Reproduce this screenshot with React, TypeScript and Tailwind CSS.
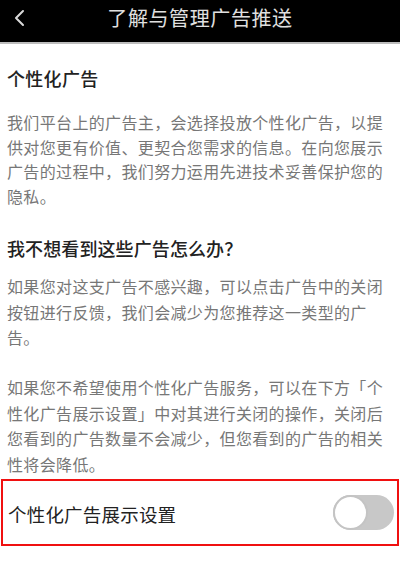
import { useState } from 'react'

const font = { fontFamily: '"Noto Sans CJK SC", "Noto Sans", sans-serif' }

function Toggle({ on, onChange }: { on: boolean; onChange: (v: boolean) => void }) {
  return (
    <button
      onClick={() => onChange(!on)}
      className={`relative w-[61px] h-[35px] rounded-full ${on ? 'bg-[#4cd964]' : 'bg-[#c8c8c8]'}`}
    >
      <span
        className={`absolute top-0 h-[35px] w-[35px] rounded-full bg-white border-2 border-[#c4c4c4] ${on ? 'right-0' : 'left-0'}`}
      />
    </button>
  )
}

export default function App() {
  const [personalized, setPersonalized] = useState(false)

  return (
    <div className="w-[400px] h-[576px] bg-white overflow-hidden" style={font}>
      <header className="relative h-[44px] bg-black flex items-center justify-center border-b-2 border-[#bdbdbd]">
        <svg className="absolute left-[13px] top-[9px]" width="14" height="18" viewBox="0 0 14 18" fill="none">
          <path d="M10 2 L3 9 L10 16" stroke="#d9d9d9" strokeWidth="2" strokeLinecap="round" strokeLinejoin="round" />
        </svg>
        <h1 className="text-[20px] text-[#e0e0e0] tracking-[0.6px] -mt-[6px]">了解与管理广告推送</h1>
      </header>

      <main className="px-[7px]">
        <section className="pt-[21px]">
          <h2 className="text-[18px] font-medium text-[#222] leading-[26px] tracking-[0.3px]">个性化广告</h2>
          <p className="mt-[19px] text-[16px] text-[#777] leading-[24.5px] tracking-[0.35px]">
            我们平台上的广告主，会选择投放个性化广告，以提供对您更有价值、更契合您需求的信息。在向您展示广告的过程中，我们努力运用先进技术妥善保护您的隐私。
          </p>
        </section>

        <section className="pt-[27px]">
          <h2 className="text-[18px] font-medium text-[#222] leading-[26px] tracking-[0.1px]">我不想看到这些广告怎么办？</h2>
          <p className="mt-[13px] text-[16px] text-[#777] leading-[25.5px] tracking-[0.35px]">
            如果您对这支广告不感兴趣，可以点击广告中的关闭按钮进行反馈，我们会减少为您推荐这一类型的广告。
          </p>
          <p className="mt-[24.5px] text-[16px] text-[#777] leading-[25.5px] tracking-[0.35px]">
            如果您不希望使用个性化广告服务，可以在下方「个性化广告展示设置」中对其进行关闭的操作，关闭后您看到的广告数量不会减少，但您看到的广告的相关性将会降低。
          </p>
        </section>
      </main>

      <div className="mt-[2px] mx-[1px] h-[67px] border-2 border-[#f01010] flex items-center justify-between pl-[5px] pr-[3px]">
        <span className="text-[18.5px] text-[#222] tracking-[0.2px] mt-[4px]">个性化广告展示设置</span>
        <Toggle on={personalized} onChange={setPersonalized} />
      </div>
    </div>
  )
}
